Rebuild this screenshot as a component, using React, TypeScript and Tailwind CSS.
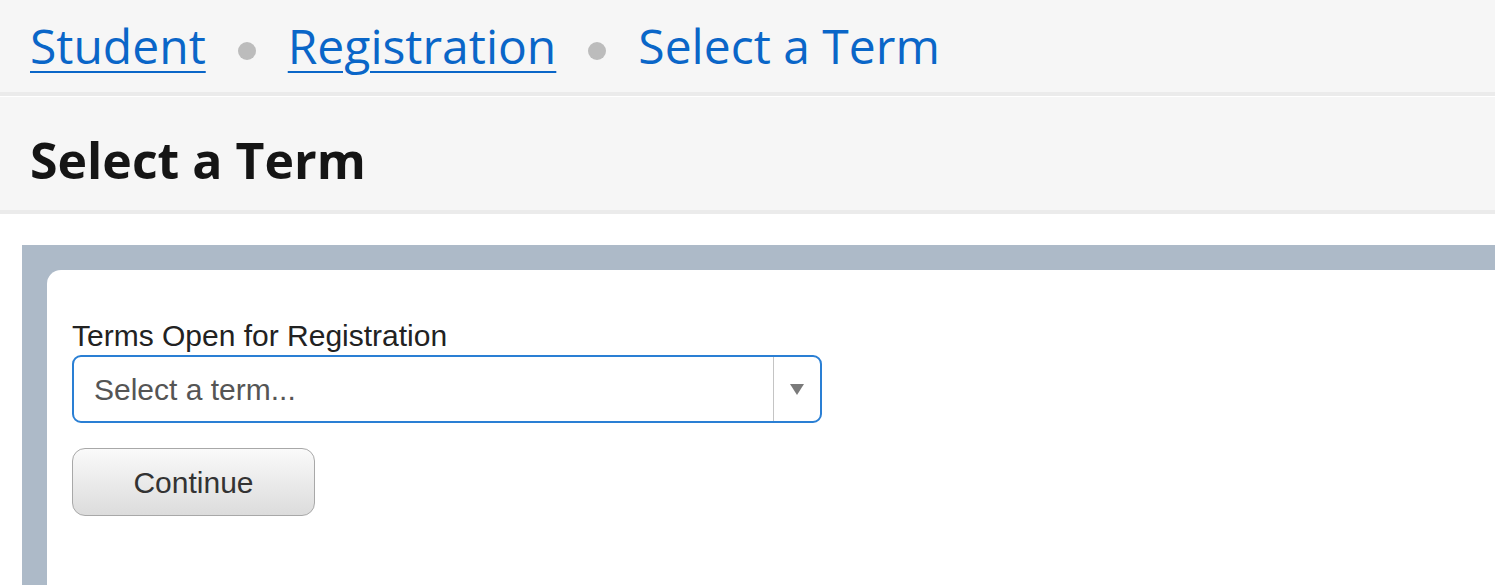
export default function App() {
  return (
    <div className="w-[1495px] h-[585px] overflow-hidden bg-white" style={{ fontFamily: '"Liberation Sans", Arial, sans-serif' }}>
      <div className="h-[92px] bg-[#f6f6f6] flex items-center pl-[30px] font-['Open_Sans',sans-serif] text-[48px] text-[#0a66c8] leading-none">
        <a href="#" className="underline decoration-[2px] underline-offset-[7px]">Student</a>
        <span className="mx-[32px] mt-[10px] w-[18px] h-[18px] rounded-full bg-[#bcbcbc] inline-block" />
        <a href="#" className="underline decoration-[2px] underline-offset-[7px]">Registration</a>
        <span className="mx-[32px] mt-[10px] w-[18px] h-[18px] rounded-full bg-[#bcbcbc] inline-block" />
        <span>Select a Term</span>
      </div>
      <div className="h-[4px] bg-[#ebebeb]" />
      <div className="h-[1px] bg-white" />
      <div className="h-[117px] bg-[#f6f6f6] flex items-center pl-[30px] border-b-[4px] border-[#ebebeb]">
        <h1 className="font-['Open_Sans',sans-serif] font-bold text-[50px] text-[#151515] leading-none mt-[12px]">Select a Term</h1>
      </div>
      <div className="mt-[31px] ml-[22px] bg-[#adbac8] pt-[25px] pl-[25px] h-[400px]">
        <div className="bg-white rounded-tl-[14px] h-full pt-[49px] pl-[25px]">
          <label className="block text-[30px] leading-[34px] text-[#222] mb-[2px]">Terms Open for Registration</label>
          <div className="w-[750px] h-[68px] border-2 border-[#2a7fd4] rounded-[9px] flex items-stretch bg-white">
            <div className="flex-1 flex items-center pl-[20px] text-[30px] text-[#555]">Select a term...</div>
            <div className="w-[1.5px] bg-[#c4c4c4]" />
            <div className="w-[46px] flex items-center justify-center">
              <svg width="14" height="11" viewBox="0 0 14 11"><polygon points="0,0 14,0 7,11" fill="#7a7a7a" /></svg>
            </div>
          </div>
          <button className="mt-[25px] w-[243px] h-[68px] border border-[#a8a8a8] rounded-[13px] bg-gradient-to-b from-[#fafafa] to-[#dcdcdc] text-[30px] text-[#333] flex items-center justify-center">
            Continue
          </button>
        </div>
      </div>
    </div>
  );
}
